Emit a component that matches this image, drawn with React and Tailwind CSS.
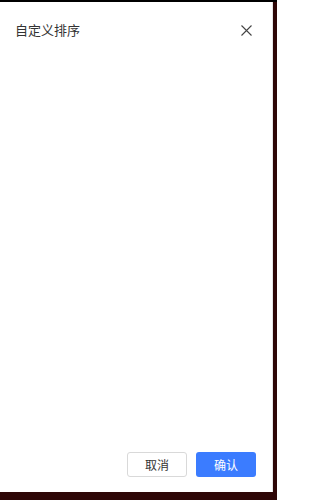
export default function App() {
  return (
    <div className="w-[277px] h-[500px] bg-[#2e0707] border-t-2 border-black flex flex-col overflow-hidden">
      <div className="w-[273px] h-[490px] bg-white flex flex-col border-r border-[#e5e5e5] font-['Noto_Sans_CJK_SC',sans-serif]">
        <div className="flex items-center justify-between pl-[15px] pr-[20px] h-[56px]">
          <span className="text-[13px] text-[#333]">自定义排序</span>
          <svg width="11" height="11" viewBox="0 0 11 11" className="text-[#444]">
            <path d="M0.5 0.5L10.5 10.5M10.5 0.5L0.5 10.5" stroke="currentColor" strokeWidth="1.1" />
          </svg>
        </div>
        <div className="flex-1" />
        <div className="flex justify-end gap-[9px] pr-[16px] pb-[15px]">
          <button className="w-[60px] h-[25px] rounded-[3px] border border-[#d9d9d9] bg-white text-[12px] text-[#333]">
            取消
          </button>
          <button className="w-[60px] h-[25px] rounded-[3px] bg-[#3b7cff] text-[12px] text-white">
            确认
          </button>
        </div>
      </div>
    </div>
  )
}
